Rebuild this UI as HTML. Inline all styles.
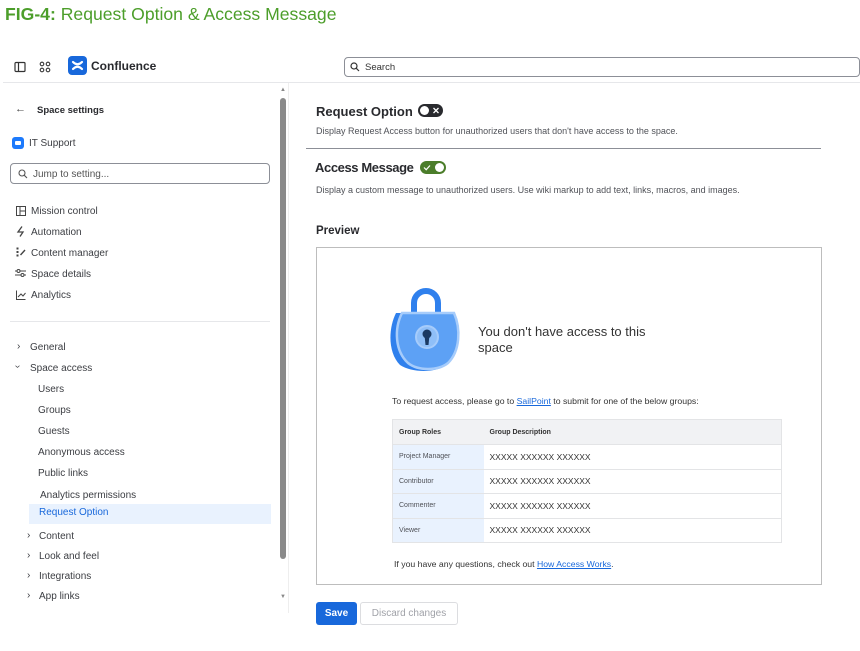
<!DOCTYPE html>
<html><head><meta charset="utf-8"><style>
*{margin:0;padding:0;box-sizing:border-box}
body{width:860px;height:651px;background:#fff;font-family:"Liberation Sans",sans-serif;color:#292a2e;position:relative;overflow:hidden}
.a{position:absolute;white-space:nowrap}
.nav{font-size:10px;color:#3b3d42}
.blue{color:#1868db}
a{color:#1868db;text-decoration:underline}
td{font-size:7px;color:#505258;padding:0 6px;border-bottom:1px solid #e3e4e6}
</style></head><body>
<div class="a" style="left:5px;top:4px;font-size:17.6px;color:#4c9e2a"><b>FIG-4:</b> Request Option &amp; Access Message</div>

<!-- top bar -->
<svg class="a" style="left:14px;top:61px" width="12" height="12" viewBox="0 0 12 12"><rect x="1" y="1.5" width="10" height="9" rx="1" fill="none" stroke="#333" stroke-width="1.2"/><line x1="4.5" y1="1.5" x2="4.5" y2="10.5" stroke="#333" stroke-width="1.2"/></svg>
<svg class="a" style="left:39px;top:61px" width="12" height="12" viewBox="0 0 12 12"><g fill="none" stroke="#333" stroke-width="1.1"><circle cx="3" cy="3" r="1.8"/><circle cx="9" cy="3" r="1.8"/><circle cx="3" cy="9" r="1.8"/><circle cx="9" cy="9" r="1.8"/></g></svg>
<div class="a" style="left:68px;top:56px;width:19px;height:19px;background:#1868db;border-radius:4px"></div>
<svg class="a" style="left:70px;top:58px" width="15" height="15" viewBox="0 0 15 15"><path d="M3 4c3 3 6 3 9 0M3 11c3-3 6-3 9 0" stroke="#fff" stroke-width="2.2" fill="none" stroke-linecap="round"/></svg>
<div class="a" style="left:91px;top:59px;font-size:12px;font-weight:bold;color:#292a2e">Confluence</div>
<div class="a" style="left:344px;top:57px;width:516px;height:20px;border:1px solid #8c8f97;border-radius:4px"></div>
<svg class="a" style="left:350px;top:62px" width="10" height="10" viewBox="0 0 10 10"><circle cx="4" cy="4" r="3" fill="none" stroke="#333" stroke-width="1.2"/><line x1="6.3" y1="6.3" x2="9" y2="9" stroke="#333" stroke-width="1.2"/></svg>
<div class="a" style="left:365px;top:62px;font-size:9.5px;color:#333">Search</div>
<div class="a" style="left:3px;top:82px;width:857px;height:1px;background:#e6e7ea"></div>

<!-- sidebar -->
<div class="a" style="left:15px;top:103px;font-size:11px;color:#444">←</div>
<div class="a" style="left:37px;top:105px;font-size:9.5px;font-weight:bold">Space settings</div>
<div class="a" style="left:12px;top:137px;width:12px;height:12px;background:#1d7afc;border-radius:3px"></div>
<div class="a" style="left:15px;top:141px;width:6px;height:4px;background:#fff;border-radius:1px"></div>
<div class="a nav" style="left:29px;top:138px">IT Support</div>
<div class="a" style="left:10px;top:163px;width:260px;height:21px;border:1px solid #8c8f97;border-radius:4px"></div>
<svg class="a" style="left:18px;top:169px" width="10" height="10" viewBox="0 0 10 10"><circle cx="4" cy="4" r="3" fill="none" stroke="#555" stroke-width="1.1"/><line x1="6.3" y1="6.3" x2="9" y2="9" stroke="#555" stroke-width="1.1"/></svg>
<div class="a nav" style="left:33px;top:169px;color:#555">Jump to setting...</div>

<svg class="a" style="left:16px;top:206px" width="10" height="10"><rect x="0.5" y="0.5" width="9" height="9" fill="none" stroke="#444"/><line x1="4" y1="0.5" x2="4" y2="9.5" stroke="#444"/><line x1="4" y1="5" x2="9.5" y2="5" stroke="#444"/></svg>
<div class="a nav" style="left:31px;top:206px">Mission control</div>
<svg class="a" style="left:16px;top:226px" width="10" height="11"><path d="M6 0.5L2 6h5l-3 4.5" fill="none" stroke="#444" stroke-width="1.3"/></svg>
<div class="a nav" style="left:31px;top:227px">Automation</div>
<svg class="a" style="left:16px;top:247px" width="10" height="10"><rect x="0.5" y="0.5" width="2" height="2" fill="#444"/><rect x="0.5" y="4" width="2" height="2" fill="#444"/><rect x="0.5" y="7.5" width="2" height="2" fill="#444"/><path d="M4.5 8L9 3" stroke="#444" stroke-width="1.4"/></svg>
<div class="a nav" style="left:31px;top:248px">Content manager</div>
<svg class="a" style="left:15px;top:268px" width="11" height="10"><g stroke="#444" fill="none"><line x1="0" y1="3" x2="11" y2="3"/><line x1="0" y1="7" x2="11" y2="7"/><circle cx="3.5" cy="3" r="1.5" fill="#fff"/><circle cx="7.5" cy="7" r="1.5" fill="#fff"/></g></svg>
<div class="a nav" style="left:31px;top:269px">Space details</div>
<svg class="a" style="left:16px;top:290px" width="10" height="10"><path d="M0.5 0.5V9.5H9.5M2 7l3-3 2 2 2.5-3" fill="none" stroke="#444"/></svg>
<div class="a nav" style="left:31px;top:290px">Analytics</div>
<div class="a" style="left:10px;top:321px;width:260px;height:1px;background:#e6e7ea"></div>

<div class="a nav" style="left:17px;top:341px">›</div>
<div class="a nav" style="left:30px;top:342px">General</div>
<div class="a nav" style="left:16px;top:361px;transform:rotate(90deg)">›</div>
<div class="a nav" style="left:30px;top:363px">Space access</div>
<div class="a nav" style="left:38px;top:384px">Users</div>
<div class="a nav" style="left:38px;top:405px">Groups</div>
<div class="a nav" style="left:38px;top:426px">Guests</div>
<div class="a nav" style="left:38px;top:447px">Anonymous access</div>
<div class="a nav" style="left:38px;top:468px">Public links</div>
<div class="a nav" style="left:40px;top:490px">Analytics permissions</div>
<div class="a" style="left:29px;top:504px;width:242px;height:20px;background:#e9f2fe"></div>
<div class="a nav blue" style="left:39px;top:507px">Request Option</div>
<div class="a nav" style="left:27px;top:530px">›</div><div class="a nav" style="left:39px;top:531px">Content</div>
<div class="a nav" style="left:27px;top:550px">›</div><div class="a nav" style="left:39px;top:551px">Look and feel</div>
<div class="a nav" style="left:27px;top:570px">›</div><div class="a nav" style="left:39px;top:571px">Integrations</div>
<div class="a nav" style="left:27px;top:590px">›</div><div class="a nav" style="left:39px;top:591px">App links</div>
<div class="a" style="left:280px;top:87px;font-size:6px;color:#888">▲</div>
<div class="a" style="left:280px;top:98px;width:6px;height:461px;background:#8a8a8a;border-radius:3px"></div>
<div class="a" style="left:280px;top:594px;font-size:6px;color:#888">▼</div>
<div class="a" style="left:288px;top:83px;width:1px;height:530px;background:#eee"></div>

<!-- main -->
<div class="a" style="left:316px;top:104px;font-size:13px;font-weight:bold">Request Option</div>
<svg class="a" style="left:418px;top:104px" width="25" height="13" viewBox="0 0 25 13"><rect width="25" height="13" rx="6.5" fill="#292a2e"/><circle cx="6.5" cy="6.5" r="4.5" fill="#fff"/><path d="M15.5 4l5 5M20.5 4l-5 5" stroke="#fff" stroke-width="1.3"/></svg>
<div class="a" style="left:316px;top:126px;font-size:9px;color:#505258">Display Request Access button for unauthorized users that don't have access to the space.</div>
<div class="a" style="left:306px;top:148px;width:515px;height:1px;background:#8c8f97"></div>
<div class="a" style="left:315px;top:160px;font-size:13px;font-weight:bold;letter-spacing:-0.4px">Access Message</div>
<svg class="a" style="left:420px;top:161px" width="26" height="13" viewBox="0 0 26 13"><rect width="26" height="13" rx="6.5" fill="#4b7d2a"/><circle cx="19.5" cy="6.5" r="4.5" fill="#fff"/><path d="M4 6.5l2.2 2.2L10 4.5" stroke="#fff" stroke-width="1.2" fill="none"/></svg>
<div class="a" style="left:316px;top:185px;font-size:9px;color:#505258">Display a custom message to unauthorized users. Use wiki markup to add text, links, macros, and images.</div>
<div class="a" style="left:316px;top:225px;font-size:11.5px;font-weight:bold">Preview</div>

<div class="a" style="left:316px;top:247px;width:506px;height:338px;border:1px solid #bdbdbd"></div>
<svg class="a" style="left:390px;top:285px" width="72" height="90" viewBox="0 0 72 90">
<path d="M24 32V18a12 12 0 0 1 24 0v14" fill="none" stroke="#2f80ed" stroke-width="6"/>
<path d="M6 28h56c8 16 8 40-6 52-10 8-34 8-46 0C-2 68-2 44 6 28z" fill="#2f80ed"/>
<path d="M12 28h52c7 16 6 38-6 50-10 8-30 8-40 0C5 66 4 44 12 28z" fill="#5da1f5" stroke="#a6ccfb" stroke-width="2.5"/>
<circle cx="37" cy="52" r="11" fill="#8fbff8" stroke="#a6ccfb" stroke-width="2"/>
<circle cx="37" cy="49" r="4.5" fill="#1b3a63"/><path d="M34.5 50h5l-1 10h-3z" fill="#1b3a63"/>
</svg>
<div class="a" style="left:478px;top:324px;font-size:13px;color:#333;line-height:16px">You don't have access to this<br>space</div>
<div class="a" style="left:392px;top:396px;font-size:8.7px;color:#333">To request access, please go to <a>SailPoint</a> to submit for one of the below groups:</div>
<table class="a" style="left:392px;top:419px;width:390px;height:124px;border-collapse:collapse;border:1px solid #e3e4e6">
<tr style="height:25px;background:#f1f2f4"><td style="width:91px;font-weight:bold;color:#333">Group Roles</td><td style="font-weight:bold;color:#333">Group Description</td></tr>
<tr><td style="background:#e9f2fe">Project Manager</td><td style="font-size:8.5px;color:#333">XXXXX XXXXXX XXXXXX</td></tr>
<tr><td style="background:#e9f2fe">Contributor</td><td style="font-size:8.5px;color:#333">XXXXX XXXXXX XXXXXX</td></tr>
<tr><td style="background:#e9f2fe">Commenter</td><td style="font-size:8.5px;color:#333">XXXXX XXXXXX XXXXXX</td></tr>
<tr><td style="background:#e9f2fe;border-bottom:none">Viewer</td><td style="font-size:8.5px;color:#333;border-bottom:none">XXXXX XXXXXX XXXXXX</td></tr>
</table>
<div class="a" style="left:394px;top:559px;font-size:8.7px;color:#333">If you have any questions, check out <a>How Access Works</a>.</div>

<div class="a" style="left:316px;top:602px;width:41px;height:23px;background:#1868db;border-radius:3px;color:#fff;font-size:10px;font-weight:bold;text-align:center;line-height:23px">Save</div>
<div class="a" style="left:360px;top:602px;width:98px;height:23px;border:1px solid #dcdde0;border-radius:3px;color:#a0a2a8;font-size:10px;text-align:center;line-height:21px">Discard changes</div>
</body></html>
